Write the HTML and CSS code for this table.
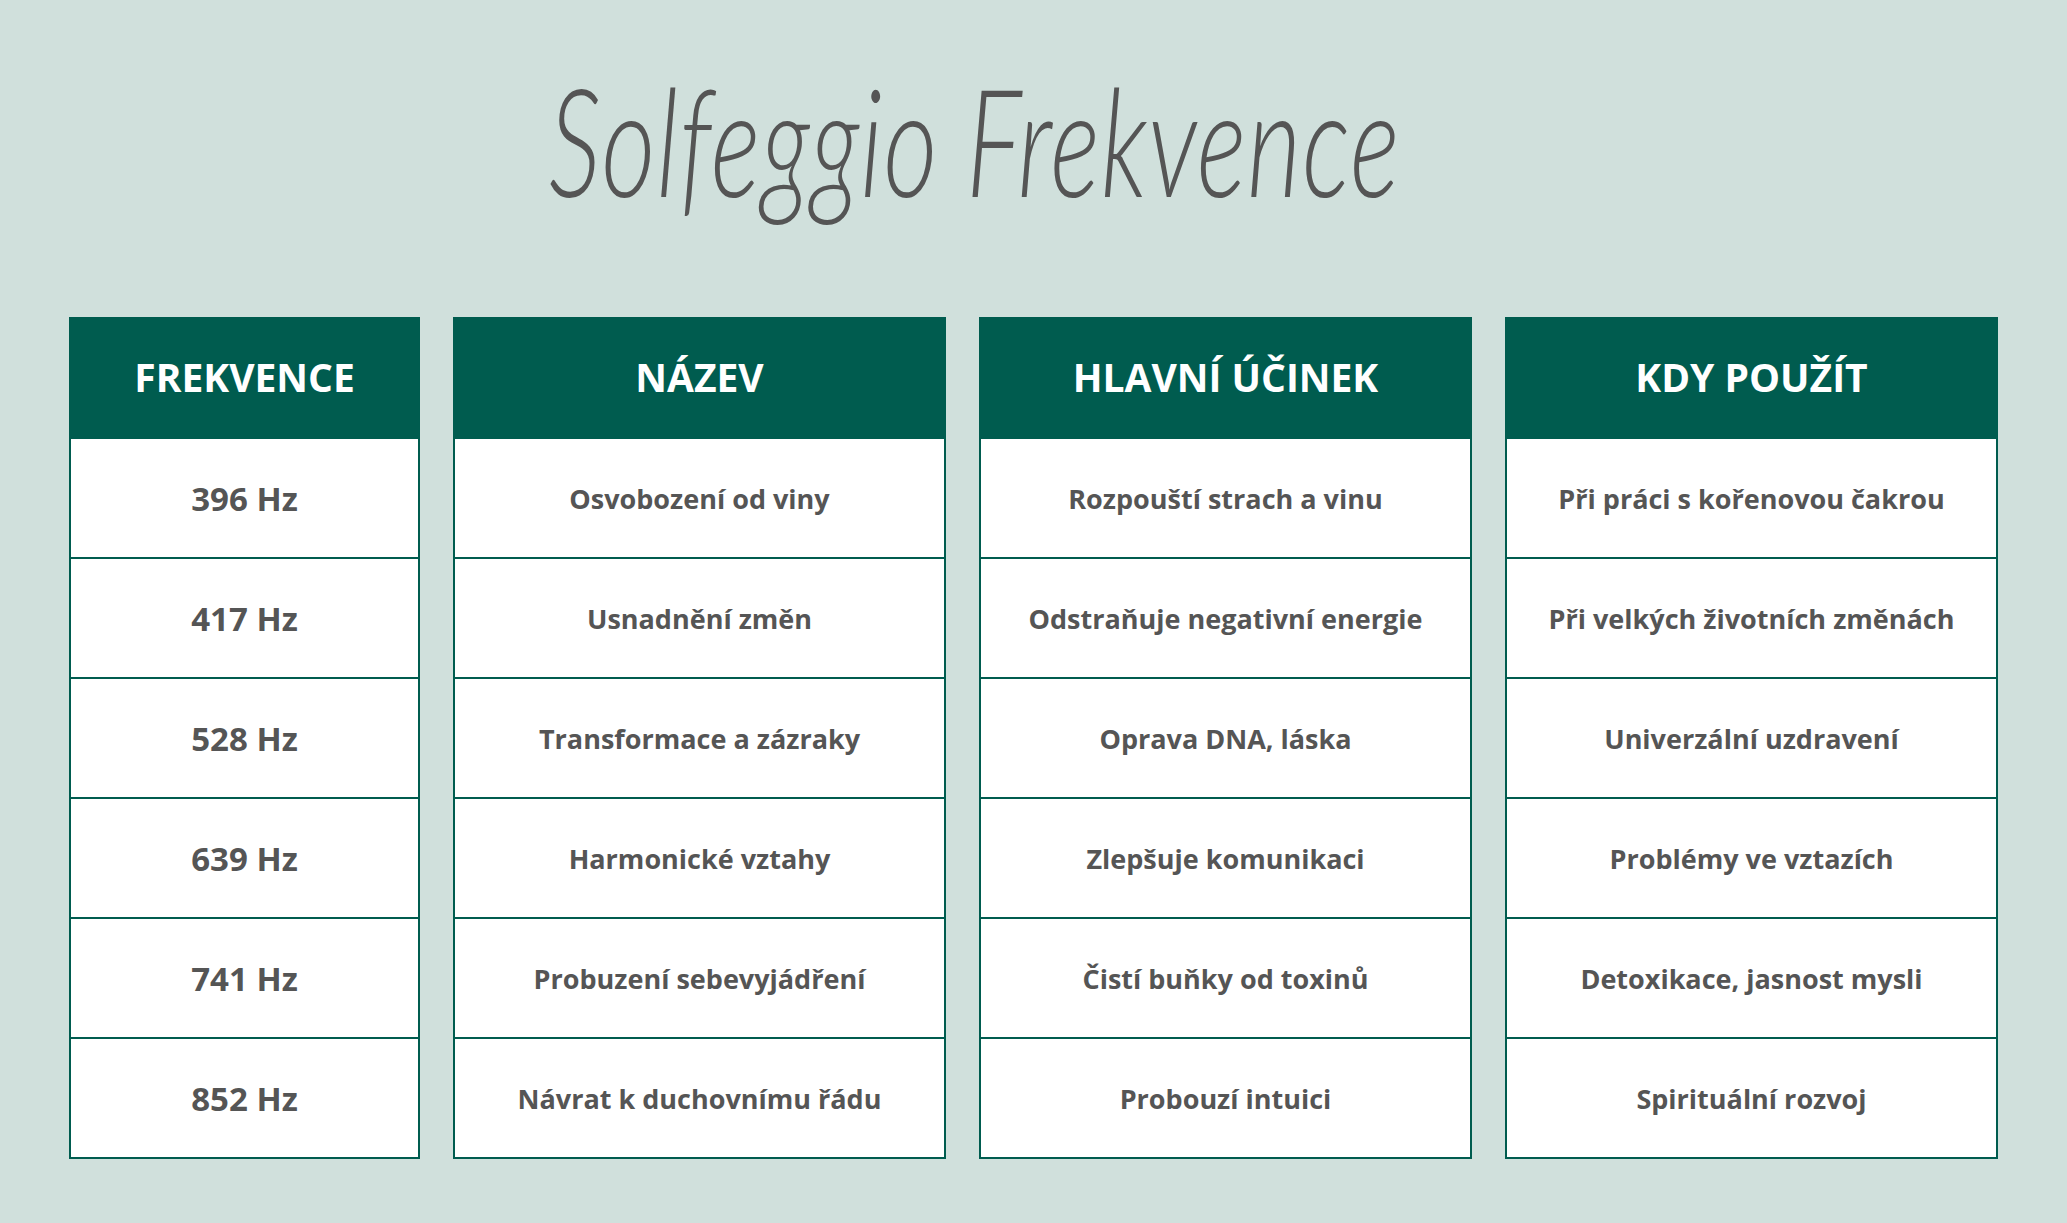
FILE: index.html
```html
<!DOCTYPE html>
<html lang="cs">
<head>
<meta charset="utf-8">
<title>Solfeggio Frekvence</title>
<link rel="stylesheet" href="styles.css">
</head>
<body>
<main class="page">
  <header class="title-wrap">
    <h1 class="title">Solfeggio Frekvence</h1>
  </header>
  <section class="table">
    <div class="cell head">FREKVENCE</div>
    <div class="cell head">NÁZEV</div>
    <div class="cell head">HLAVNÍ ÚČINEK</div>
    <div class="cell head">KDY POUŽÍT</div>

    <div class="cell freq">396 Hz</div>
    <div class="cell">Osvobození od viny</div>
    <div class="cell">Rozpouští strach a vinu</div>
    <div class="cell">Při práci s kořenovou čakrou</div>

    <div class="cell freq">417 Hz</div>
    <div class="cell">Usnadnění změn</div>
    <div class="cell">Odstraňuje negativní energie</div>
    <div class="cell">Při velkých životních změnách</div>

    <div class="cell freq">528 Hz</div>
    <div class="cell">Transformace a zázraky</div>
    <div class="cell">Oprava DNA, láska</div>
    <div class="cell">Univerzální uzdravení</div>

    <div class="cell freq">639 Hz</div>
    <div class="cell">Harmonické vztahy</div>
    <div class="cell">Zlepšuje komunikaci</div>
    <div class="cell">Problémy ve vztazích</div>

    <div class="cell freq">741 Hz</div>
    <div class="cell">Probuzení sebevyjádření</div>
    <div class="cell">Čistí buňky od toxinů</div>
    <div class="cell">Detoxikace, jasnost mysli</div>

    <div class="cell freq last">852 Hz</div>
    <div class="cell last">Návrat k duchovnímu řádu</div>
    <div class="cell last">Probouzí intuici</div>
    <div class="cell last">Spirituální rozvoj</div>
  </section>
</main>
</body>
</html>
```

FILE: styles.css
```css
* {
  box-sizing: border-box;
}

html, body {
  margin: 0;
  padding: 0;
  background: #d0e0dc;
}

body {
  width: 2067px;
  height: 1223px;
  overflow: hidden;
  font-family: "Open Sans", "Liberation Sans", sans-serif;
}

.page {
  display: flex;
  flex-direction: column;
  padding: 0 69px;
}

.title-wrap {
  height: 317px;
  display: flex;
  justify-content: center;
  align-items: flex-start;
  padding-top: 88px;
  padding-right: 118px;
}

.title {
  margin: 0;
  font-family: "Lato", "Open Sans", sans-serif;
  font-weight: 300;
  font-style: italic;
  font-size: 100px;
  line-height: 1;
  color: #555555;
  letter-spacing: 1px;
  white-space: nowrap;
  transform: scale(1.05, 1.5);
}

.table {
  display: grid;
  grid-template-columns: 351px 493px 493px 493px;
  grid-auto-rows: 120px;
  column-gap: 33px;
}

.cell {
  display: flex;
  align-items: center;
  justify-content: center;
  background: #ffffff;
  border-left: 2px solid #005c4f;
  border-right: 2px solid #005c4f;
  border-top: 2px solid #005c4f;
  color: #555555;
  font-weight: 700;
  font-size: 27px;
  text-align: center;
}

.cell.last {
  height: 122px;
  border-bottom: 2px solid #005c4f;
}

.cell.freq {
  font-size: 33px;
}

.cell.head {
  background: #005c4f;
  color: #ffffff;
  font-size: 39px;
  padding-bottom: 3px;
}
```
